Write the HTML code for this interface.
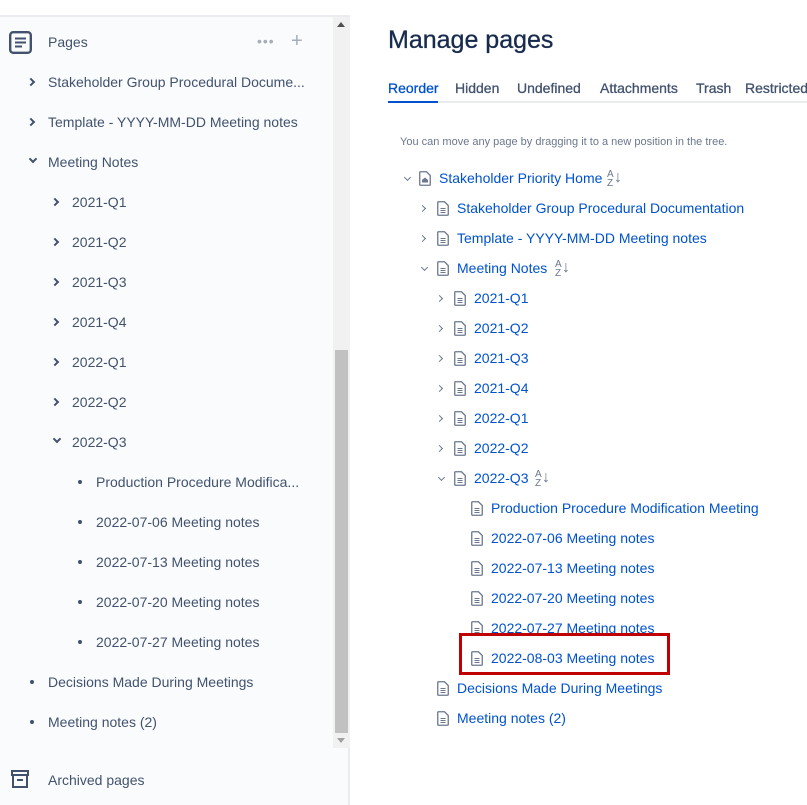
<!DOCTYPE html>
<html><head><meta charset="utf-8"><style>
*{margin:0;padding:0;box-sizing:border-box}
body{width:807px;height:805px;overflow:hidden;background:#fff;font-family:"Liberation Sans",sans-serif;position:relative}
.sb{position:absolute;left:0;top:0;width:350px;height:805px;background:#fafbfc;border-right:2px solid #ebecf0}
.top{position:absolute;left:0;top:0;width:350px;height:17px;background:#fff;border-bottom:2px solid #ebecf0}
.t{position:absolute;font-size:14px;color:#42526e;white-space:nowrap;line-height:16px}
.chev{position:absolute;width:6px;height:6px;border-right:2px solid #42526e;border-bottom:2px solid #42526e}
.cr{transform:rotate(-45deg)}
.cd{transform:rotate(45deg)}
.dot{position:absolute;width:4px;height:4px;border-radius:50%;background:#42526e}
.track{position:absolute;left:333px;top:17px;width:17px;height:731px;background:#f1f1f1}
.thumb{position:absolute;left:335px;top:350px;width:13px;height:383px;background:#c1c1c1}
.l{position:absolute;font-size:14px;color:#0052cc;white-space:nowrap;line-height:16px;margin-top:-1px}
.rc{position:absolute;width:5px;height:5px;border-right:1.5px solid #6b778c;border-bottom:1.5px solid #6b778c}
.pg{position:absolute;width:12px;height:15px}
.az{position:absolute;font-size:10px;color:#6b778c;line-height:9px;margin-top:-1px}
.ar{position:absolute;font-size:16px;color:#6b778c;line-height:16px;margin-top:-1px}
.tab{position:absolute;top:80px;font-size:14px;color:#42526e;line-height:16px;-webkit-text-stroke:0.3px #42526e}
</style></head><body>
<div class="sb"></div><div class="top"></div>
<svg style="position:absolute;left:9px;top:31px" width="23" height="23" viewBox="0 0 23 23"><rect x="1.2" y="1.2" width="20.6" height="20.6" rx="3" fill="none" stroke="#42526e" stroke-width="2.4"/><rect x="6" y="6.5" width="11" height="2" fill="#42526e"/><rect x="6" y="10.5" width="11" height="2" fill="#42526e"/><rect x="6" y="14.5" width="7" height="2" fill="#42526e"/></svg>
<div class="t" style="left:48px;top:34px">Pages</div>
<div class="t" style="left:257px;top:33px;color:#a5adba;font-size:14px;letter-spacing:1px">•••</div>
<div class="t" style="left:291px;top:33px;color:#a5adba;font-size:20px">+</div>
<div class="track"></div><div class="thumb"></div>
<div style="position:absolute;left:337px;top:22px;width:0;height:0;border-left:4px solid transparent;border-right:4px solid transparent;border-bottom:5px solid #505050"></div>
<div style="position:absolute;left:337px;top:738px;width:0;height:0;border-left:4px solid transparent;border-right:4px solid transparent;border-top:5px solid #a0a0a0"></div>

<div class="chev cr" style="left:28px;top:79px"></div><div class="t" style="left:48px;top:74px">Stakeholder Group Procedural Docume...</div>
<div class="chev cr" style="left:28px;top:119px"></div><div class="t" style="left:48px;top:114px">Template - YYYY-MM-DD Meeting notes</div>
<div class="chev cd" style="left:30px;top:156px"></div><div class="t" style="left:48px;top:154px">Meeting Notes</div>
<div class="chev cr" style="left:52px;top:199px"></div><div class="t" style="left:72px;top:194px">2021-Q1</div>
<div class="chev cr" style="left:52px;top:239px"></div><div class="t" style="left:72px;top:234px">2021-Q2</div>
<div class="chev cr" style="left:52px;top:279px"></div><div class="t" style="left:72px;top:274px">2021-Q3</div>
<div class="chev cr" style="left:52px;top:319px"></div><div class="t" style="left:72px;top:314px">2021-Q4</div>
<div class="chev cr" style="left:52px;top:359px"></div><div class="t" style="left:72px;top:354px">2022-Q1</div>
<div class="chev cr" style="left:52px;top:399px"></div><div class="t" style="left:72px;top:394px">2022-Q2</div>
<div class="chev cd" style="left:54px;top:436px"></div><div class="t" style="left:72px;top:434px">2022-Q3</div>
<div class="dot" style="left:78px;top:480px"></div><div class="t" style="left:96px;top:474px">Production Procedure Modifica...</div>
<div class="dot" style="left:78px;top:520px"></div><div class="t" style="left:96px;top:514px">2022-07-06 Meeting notes</div>
<div class="dot" style="left:78px;top:560px"></div><div class="t" style="left:96px;top:554px">2022-07-13 Meeting notes</div>
<div class="dot" style="left:78px;top:600px"></div><div class="t" style="left:96px;top:594px">2022-07-20 Meeting notes</div>
<div class="dot" style="left:78px;top:640px"></div><div class="t" style="left:96px;top:634px">2022-07-27 Meeting notes</div>
<div class="dot" style="left:30px;top:680px"></div><div class="t" style="left:48px;top:674px">Decisions Made During Meetings</div>
<div class="dot" style="left:30px;top:720px"></div><div class="t" style="left:48px;top:714px">Meeting notes (2)</div>
<svg style="position:absolute;left:11px;top:770px" width="18" height="18" viewBox="0 0 18 18"><rect x="1" y="1" width="16" height="4" fill="none" stroke="#42526e" stroke-width="2"/><rect x="2" y="5" width="14" height="12" fill="none" stroke="#42526e" stroke-width="2"/><rect x="6" y="9" width="6" height="2" fill="#42526e"/></svg>
<div class="t" style="left:48px;top:772px">Archived pages</div>

<div style="position:absolute;left:388px;top:26px;font-size:25px;color:#172b4d;line-height:28px;-webkit-text-stroke:0.3px #172b4d">Manage pages</div>
<div class="tab" style="left:388px;color:#0052cc;-webkit-text-stroke:0.3px #0052cc">Reorder</div>
<div class="tab" style="left:455px">Hidden</div>
<div class="tab" style="left:517px">Undefined</div>
<div class="tab" style="left:600px">Attachments</div>
<div class="tab" style="left:696px">Trash</div>
<div class="tab" style="left:745px">Restricted</div>
<div style="position:absolute;left:388px;top:101px;width:419px;height:2px;background:#ebecf0"></div>
<div style="position:absolute;left:388px;top:101px;width:50px;height:2px;background:#0052cc"></div>
<div style="position:absolute;left:400px;top:136px;font-size:11px;color:#6b778c;white-space:nowrap">You can move any page by dragging it to a new position in the tree.</div>

<svg width="0" height="0" style="position:absolute"><defs>
<symbol id="p" viewBox="0 0 12 15"><path d="M1.5 .75H7.5L11.25 4.5V13.5Q11.25 14.25 10.5 14.25H1.5Q.75 14.25 .75 13.5V1.5Q.75 .75 1.5 .75Z" fill="#fff" stroke="#6b778c" stroke-width="1.3"/><path d="M3.5 7.5H8.5M3.5 9.5H8.5M3.5 11.5H8.5" stroke="#6b778c" stroke-width="1"/></symbol>
<symbol id="h" viewBox="0 0 12 15"><path d="M1.5 .75H7.5L11.25 4.5V13.5Q11.25 14.25 10.5 14.25H1.5Q.75 14.25 .75 13.5V1.5Q.75 .75 1.5 .75Z" fill="#fff" stroke="#6b778c" stroke-width="1.3"/><path d="M3 9L6 6.5L9 9V11.5H3Z" fill="#6b778c"/></symbol>
</defs></svg>

<div class="rc" style="left:405px;top:175px;transform:rotate(45deg)"></div>
<svg class="pg" style="left:419px;top:171px"><use href="#h"/></svg>
<div class="l" style="left:439px;top:171px">Stakeholder Priority Home</div>
<div class="az" style="left:607px;top:171px">A<br>Z</div><div class="ar" style="left:614px;top:171px">↓</div>

<div class="rc" style="left:420px;top:206px;transform:rotate(-45deg)"></div>
<svg class="pg" style="left:437px;top:201px"><use href="#p"/></svg>
<div class="l" style="left:457px;top:201px">Stakeholder Group Procedural Documentation</div>
<div class="rc" style="left:420px;top:236px;transform:rotate(-45deg)"></div>
<svg class="pg" style="left:437px;top:231px"><use href="#p"/></svg>
<div class="l" style="left:457px;top:231px">Template - YYYY-MM-DD Meeting notes</div>
<div class="rc" style="left:422px;top:265px;transform:rotate(45deg)"></div>
<svg class="pg" style="left:437px;top:261px"><use href="#p"/></svg>
<div class="l" style="left:457px;top:261px">Meeting Notes</div>
<div class="az" style="left:555px;top:261px">A<br>Z</div><div class="ar" style="left:562px;top:261px">↓</div>

<div class="rc" style="left:437px;top:296px;transform:rotate(-45deg)"></div><svg class="pg" style="left:454px;top:291px"><use href="#p"/></svg><div class="l" style="left:474px;top:291px">2021-Q1</div>
<div class="rc" style="left:437px;top:326px;transform:rotate(-45deg)"></div><svg class="pg" style="left:454px;top:321px"><use href="#p"/></svg><div class="l" style="left:474px;top:321px">2021-Q2</div>
<div class="rc" style="left:437px;top:356px;transform:rotate(-45deg)"></div><svg class="pg" style="left:454px;top:351px"><use href="#p"/></svg><div class="l" style="left:474px;top:351px">2021-Q3</div>
<div class="rc" style="left:437px;top:386px;transform:rotate(-45deg)"></div><svg class="pg" style="left:454px;top:381px"><use href="#p"/></svg><div class="l" style="left:474px;top:381px">2021-Q4</div>
<div class="rc" style="left:437px;top:416px;transform:rotate(-45deg)"></div><svg class="pg" style="left:454px;top:411px"><use href="#p"/></svg><div class="l" style="left:474px;top:411px">2022-Q1</div>
<div class="rc" style="left:437px;top:446px;transform:rotate(-45deg)"></div><svg class="pg" style="left:454px;top:441px"><use href="#p"/></svg><div class="l" style="left:474px;top:441px">2022-Q2</div>
<div class="rc" style="left:439px;top:475px;transform:rotate(45deg)"></div><svg class="pg" style="left:454px;top:471px"><use href="#p"/></svg><div class="l" style="left:474px;top:471px">2022-Q3</div>
<div class="az" style="left:535px;top:471px">A<br>Z</div><div class="ar" style="left:542px;top:471px">↓</div>

<svg class="pg" style="left:471px;top:501px"><use href="#p"/></svg><div class="l" style="left:491px;top:501px">Production Procedure Modification Meeting</div>
<svg class="pg" style="left:471px;top:531px"><use href="#p"/></svg><div class="l" style="left:491px;top:531px">2022-07-06 Meeting notes</div>
<svg class="pg" style="left:471px;top:561px"><use href="#p"/></svg><div class="l" style="left:491px;top:561px">2022-07-13 Meeting notes</div>
<svg class="pg" style="left:471px;top:591px"><use href="#p"/></svg><div class="l" style="left:491px;top:591px">2022-07-20 Meeting notes</div>
<svg class="pg" style="left:471px;top:621px"><use href="#p"/></svg><div class="l" style="left:491px;top:621px">2022-07-27 Meeting notes</div>
<svg class="pg" style="left:471px;top:651px"><use href="#p"/></svg><div class="l" style="left:491px;top:651px">2022-08-03 Meeting notes</div>
<div style="position:absolute;left:459px;top:633px;width:211px;height:42px;border:3px solid #c00000"></div>

<svg class="pg" style="left:437px;top:681px"><use href="#p"/></svg><div class="l" style="left:457px;top:681px">Decisions Made During Meetings</div>
<svg class="pg" style="left:437px;top:711px"><use href="#p"/></svg><div class="l" style="left:457px;top:711px">Meeting notes (2)</div>
</body></html>
